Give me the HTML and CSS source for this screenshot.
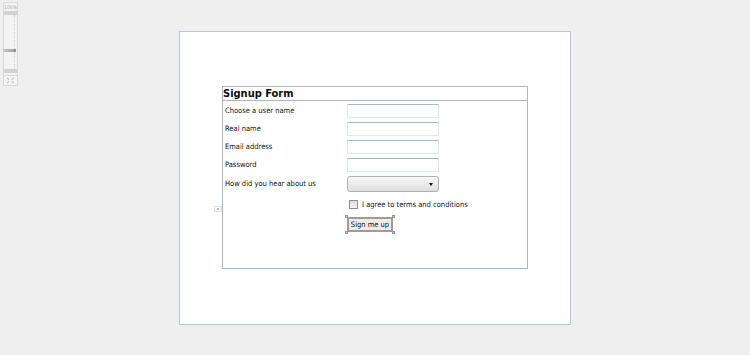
FILE: index.html
```html
<!DOCTYPE html>
<html>
<head>
<meta charset="utf-8">
<link rel="stylesheet" href="styles.css">
</head>
<body>
<div class="zoom-widget">
  <div class="zoom-label">100%</div>
  <div class="zoom-cap"></div>
  <div class="zoom-track">
    <div class="zoom-line"></div>
    <div class="zoom-thumb"></div>
  </div>
  <div class="zoom-cap"></div>
  <div class="zoom-fit">
    <svg width="9" height="7" viewBox="0 0 9 7"><path d="M1 1l2 1.5M8 1L6 2.5M1 6l2-1.5M8 6L6 4.5" stroke="#aaa" stroke-width="1" fill="none"/></svg>
  </div>
</div>

<div class="canvas">
  <div class="form-box">
    <div class="form-title">Signup Form</div>
    <div class="fields">
      <label class="lbl">Choose a user name</label><div class="input"></div>
      <label class="lbl">Real name</label><div class="input"></div>
      <label class="lbl">Email address</label><div class="input"></div>
      <label class="lbl">Password</label><div class="input"></div>
      <label class="lbl">How did you hear about us</label>
      <div class="select"><span class="arrow"></span></div>
      <div class="agree"><span class="check"></span><span class="agree-text">I agree to terms and conditions</span></div>
      <div class="btn-wrap">
        <div class="btn">Sign me up</div>
        <span class="handle h-tl"></span><span class="handle h-tr"></span>
        <span class="handle h-bl"></span><span class="handle h-br"></span>
      </div>
    </div>
    <svg class="anchor" width="8" height="6" viewBox="0 0 8 6"><rect x="0.5" y="0.5" width="7" height="5" fill="none" stroke="#a9c2e0" stroke-dasharray="1 1"/><rect x="3" y="2" width="2" height="2" fill="#a9c2e0"/></svg>
  </div>
</div>
</body>
</html>
```
FILE: styles.css
```css
html, body {
  margin: 0;
  padding: 0;
}
body {
  background: #efefef;
  width: 750px;
  height: 355px;
  overflow: hidden;
  position: relative;
  font-family: "DejaVu Sans Condensed", "DejaVu Sans", sans-serif;
  color: #141414;
}
.zoom-widget {
  position: absolute;
  left: 3px;
  top: 2px;
  width: 15px;
  height: 84px;
  border: 1px solid #dadada;
  background: #f3f3f3;
  box-sizing: border-box;
  display: flex;
  flex-direction: column;
}
.zoom-label {
  font-size: 5px;
  color: #a8a8a8;
  text-align: center;
  height: 8px;
  line-height: 8px;
}
.zoom-cap {
  height: 4px;
  background: #d2d2d2;
}
.zoom-track {
  flex: 1;
  position: relative;
}
.zoom-line {
  position: absolute;
  left: 10px;
  top: 0;
  bottom: 0;
  width: 1px;
  border-left: 1px dotted #cfcfcf;
}
.zoom-thumb {
  position: absolute;
  left: -1px;
  right: 1px;
  top: 34px;
  height: 3px;
  background: linear-gradient(90deg, #c8c8c8, #a9a9a9 70%, #8f8f8f);
}
.zoom-fit {
  height: 9px;
  margin-top: 2px;
  border-top: 1px solid #d8d8d8;
  display: flex;
  align-items: center;
  justify-content: center;
}
.canvas {
  margin: 31px 0 0 179px;
  width: 392px;
  height: 294px;
  box-sizing: border-box;
  border: 1px solid #b7c7da;
  background: #fff;
  padding: 54px 0 0 42px;
}
.form-box {
  position: relative;
  width: 306px;
  height: 183px;
  box-sizing: border-box;
  border: 1px solid #aeb8c4;
}
.form-title {
  height: 13px;
  line-height: 13px;
  border-bottom: 1px solid #b3b3b3;
  font-weight: bold;
  font-size: 11px;
  padding-left: 0;
  color: #0d0d0d;
}
.fields {
  display: grid;
  grid-template-columns: 122px 92px;
  grid-template-rows: 14px 14px 14px 14px 16px;
  row-gap: 4px;
  padding: 3px 0 0 2px;
  align-items: center;
  font-size: 7.5px;
}
.lbl {
  line-height: 14px;
}
.input {
  height: 14px;
  box-sizing: border-box;
  border: 1px solid #dde7f2;
  border-top-color: #a7b6c7;
  background: #fff;
}
.select {
  height: 16px;
  box-sizing: border-box;
  border: 1px solid #b0b0b0;
  border-radius: 3px;
  background: linear-gradient(#f7f7f7, #dedede);
  position: relative;
}
.arrow {
  position: absolute;
  right: 5px;
  top: 6px;
  border-left: 2.5px solid transparent;
  border-right: 2.5px solid transparent;
  border-top: 3px solid #111;
}
.agree {
  grid-column: 2 / span 1;
  display: flex;
  align-items: center;
  margin-top: 4px;
  margin-left: 2px;
  height: 9px;
  white-space: nowrap;
}
.check {
  width: 9px;
  height: 9px;
  box-sizing: border-box;
  border: 1px solid #8e8e8e;
  background: linear-gradient(#dcdcdc, #f4f4f4);
  margin-right: 4px;
  flex: none;
}
.agree-text {
  font-size: 7.5px;
}
.btn-wrap {
  grid-column: 2 / span 1;
  margin-top: 4px;
  position: relative;
  width: 46px;
  height: 15px;
}
.btn {
  width: 46px;
  height: 15px;
  box-sizing: border-box;
  border: 2px solid #a8998a;
  background: #ececec;
  font-size: 7.5px;
  line-height: 11px;
  text-align: center;
}
.handle {
  position: absolute;
  width: 3px;
  height: 3px;
  background: #c4d6ec;
  border: 1px solid #7b9bc4;
  box-sizing: border-box;
}
.h-tl { left: -2px; top: -2px; }
.h-tr { right: -2px; top: -2px; }
.h-bl { left: -2px; bottom: -2px; }
.h-br { right: -2px; bottom: -2px; }
.anchor {
  position: absolute;
  left: -9px;
  top: 119px;
}
```
